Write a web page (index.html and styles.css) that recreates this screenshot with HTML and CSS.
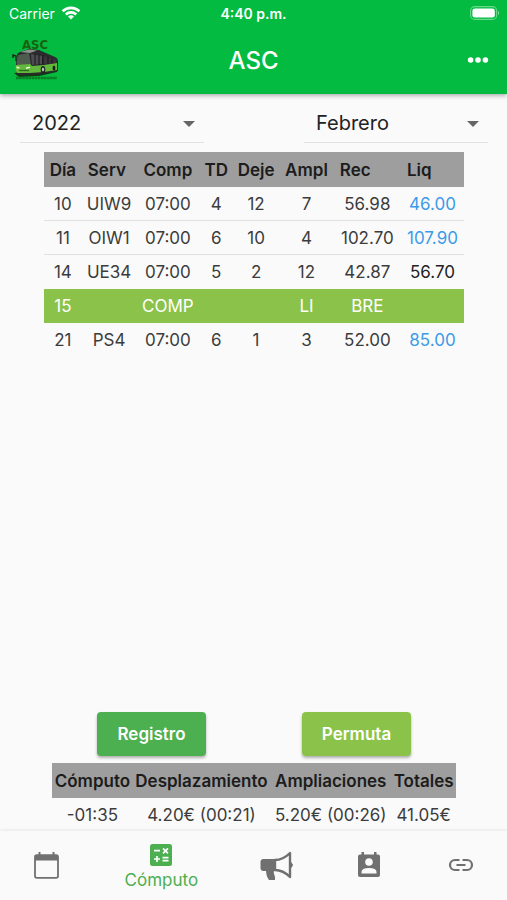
FILE: index.html
```html
<!DOCTYPE html>
<html lang="es">
<head>
<meta charset="utf-8">
<meta name="viewport" content="width=device-width, initial-scale=1">
<title>ASC</title>
<link rel="stylesheet" href="styles.css">
</head>
<body>
<header class="top">
  <div class="status">
    <div class="carrier">
      <span>Carrier</span>
      <svg width="20" height="16" viewBox="0 0 20 16" fill="none" stroke="#fff" stroke-width="2.6" aria-hidden="true"><path d="M1.6 6.3a12 12 0 0 1 16.8 0M4.8 9.5a7.5 7.5 0 0 1 10.4 0"/><path d="M10 14.6l-3-3a4.3 4.3 0 0 1 6 0z" fill="#fff" stroke="none"/></svg>
    </div>
    <span class="time">4:40 p.m.</span>
    <svg class="battery" width="30" height="14" viewBox="0 0 30 14" aria-hidden="true"><rect x=".6" y=".6" width="26" height="12.8" rx="4" fill="none" stroke="#6bd98a" stroke-width="1.1"/><rect x="2.4" y="2.4" width="22.4" height="9.2" rx="2.4" fill="#fff"/><path d="M28 4.8q2 2.2 0 4.4z" fill="#8be09f"/></svg>
  </div>
  <div class="appbar">
    <svg class="logo" width="48" height="48" viewBox="0 0 48 48" aria-hidden="true">
      <text class="logo-name" x="23" y="13">ASC</text>
      <path d="M2 37l16-2 27-2v3l-18 4-20 1z" fill="#123a14"/>
      <path d="M5 19q0-2 3-3l9-3 10 1 16 7q3 1 3 5v9l-16 3-20 1H5q-2-8 0-20z" fill="#2b2a2e"/>
      <path d="M6 19l11-2 2 12-14 1q-1-6 1-11z" fill="#4e5c50"/>
      <path d="M8 16l9-2.500 8 1-7 2.500z" fill="#8f948d"/>
      <path d="M4 29l14-1 2 2 12-1 13-2v7l-13 2-14 1H5q-2-3-1-8z" fill="#62b83a"/>
      <path d="M19 18l11 2v8l-10 1z" fill="#4d4c50"/>
      <path d="M31 20l13 4v3l-13 1z" fill="#3a343c"/>
      <path d="M23 18v11M27 19v10M31 19v9M36 21v7M40 23v4" stroke="#161718" stroke-width="1"/>
      <path d="M4 25v-5l-3-1v3" stroke="#222" stroke-width="1.400" fill="none"/>
      <path d="M4.500 30.500l3 .5v1.600l-3-.4zM14 31.500l4-1v1.500l-4 1z" fill="#eef8df"/>
      <path d="M7 34.500h10" stroke="#2d6b22" stroke-width="1.300"/>
      <ellipse cx="31" cy="33.500" rx="2.300" ry="3.500" fill="#1d211e"/><ellipse cx="31" cy="33.500" rx="1.200" ry="2" fill="#b2bbb0"/>
      <ellipse cx="42" cy="32" rx="1.400" ry="2.600" fill="#1d211e"/>
      <path d="M4 42h41" stroke="#0c7d22" stroke-width="2.400" stroke-dasharray="2.600 .5"/>
    </svg>
    <h1>ASC</h1>
    <button class="more" type="button" aria-label="Más opciones"><svg width="22" height="8" viewBox="0 0 22 8" fill="#fff"><circle cx="3.6" cy="4" r="2.8"/><circle cx="11" cy="4" r="2.8"/><circle cx="18.4" cy="4" r="2.8"/></svg></button>
  </div>
</header>
<main>
  <div class="filters">
    <div class="picker">
      <select aria-label="Año"><option>2022</option></select>
      <svg class="arrow" width="12" height="6" viewBox="0 0 12 6"><path d="M0 0h12L6 6z" fill="#666"/></svg>
    </div>
    <div class="picker">
      <select aria-label="Mes"><option>Febrero</option></select>
      <svg class="arrow" width="12" height="6" viewBox="0 0 12 6"><path d="M0 0h12L6 6z" fill="#666"/></svg>
    </div>
  </div>
  <table class="days">
    <colgroup><col class="c-dia"><col class="c-serv"><col class="c-comp"><col class="c-td"><col class="c-deje"><col class="c-ampl"><col class="c-rec"><col class="c-liq"></colgroup>
    <thead><tr><th>Día</th><th class="start">Serv</th><th>Comp</th><th>TD</th><th>Deje</th><th>Ampl</th><th class="start">Rec</th><th class="start">Liq</th></tr></thead>
    <tbody>
      <tr><td>10</td><td>UIW9</td><td>07:00</td><td>4</td><td>12</td><td>7</td><td>56.98</td><td class="blue">46.00</td></tr>
      <tr><td>11</td><td>OIW1</td><td>07:00</td><td>6</td><td>10</td><td>4</td><td>102.70</td><td class="blue">107.90</td></tr>
      <tr class="before-free"><td>14</td><td>UE34</td><td>07:00</td><td>5</td><td>2</td><td>12</td><td>42.87</td><td class="black">56.70</td></tr>
      <tr class="free"><td>15</td><td></td><td>COMP</td><td></td><td></td><td>LI</td><td>BRE</td><td></td></tr>
      <tr><td>21</td><td>PS4</td><td>07:00</td><td>6</td><td>1</td><td>3</td><td>52.00</td><td class="blue">85.00</td></tr>
    </tbody>
  </table>
  <div class="actions">
    <button class="btn" type="button">Registro</button>
    <button class="btn light" type="button">Permuta</button>
  </div>
  <table class="totals">
    <colgroup><col class="t-comp"><col class="t-desp"><col class="t-ampl"><col class="t-tot"></colgroup>
    <thead><tr><th>Cómputo</th><th>Desplazamiento</th><th>Ampliaciones</th><th>Totales</th></tr></thead>
    <tbody><tr><td>-01:35</td><td>4.20€ (00:21)</td><td>5.20€ (00:26)</td><td>41.05€</td></tr></tbody>
  </table>
</main>
<nav class="tabs">
  <a href="#calendario" aria-label="Calendario"><svg width="28" height="30" viewBox="0 0 28 30"><path d="M7.500 1v5M21.500 1v5" stroke="#707070" stroke-width="2"/><rect x="3" y="4.200" width="23" height="22.600" rx="1.800" fill="none" stroke="#707070" stroke-width="1.800"/><path d="M3 4h23v5.500H3z" fill="#707070"/></svg></a>
  <a class="active" href="#computo"><svg width="24" height="24" viewBox="0 0 24 24"><rect x="1" y="1" width="22" height="22" rx="2.5" fill="#4caf50"/><path d="M5 7.7h6M14 5.3l5 5M19 5.3l-5 5M5 16h6M8 13v6M13.5 14.6h6M13.5 17.6h6" stroke="#fff" stroke-width="1.7"/></svg><span>Cómputo</span></a>
  <a href="#avisos" aria-label="Avisos"><svg width="34" height="32" viewBox="0 0 34 32"><path d="M3.500 9H15v12H3.500Q.5 21 .5 18v-6q0-3 3-3z" fill="#707070"/><path d="M6 20h8q-1 3 1 7v3H9q-3-4-3-10z" fill="#707070"/><path d="M15 10q8 0 15-7v24q-7-7-15-7z" fill="none" stroke="#707070" stroke-width="2.4" stroke-linejoin="round"/><path d="M31 12.500q3 2.500 0 5z" fill="#707070" stroke="#707070"/></svg></a>
  <a href="#contactos" aria-label="Contactos"><svg width="24" height="28" viewBox="0 0 24 28"><path d="M4.500 0h2.500v2.500h10V0h2.500v2.500H21q2 0 2 2V23q0 2-2 2H3q-2 0-2-2V4.500q0-2 2-2h1.500z" fill="#707070"/><circle cx="12" cy="10" r="3.800" fill="#fafafa"/><path d="M4.500 21.500v-1.500q0-4 7.500-4t7.500 4v1.500z" fill="#fafafa"/></svg></a>
  <a href="#enlaces" aria-label="Enlaces"><svg width="26" height="16" viewBox="0 0 26 16" fill="none" stroke="#707070" stroke-width="2.200"><path d="M11.500 2H7a5 5 0 0 0 0 10h4.500M14.500 2H19a5 5 0 0 1 0 10h-4.500M8.500 7h9"/></svg></a>
</nav>
</body>
</html>
```
FILE: styles.css
```css
* { box-sizing: border-box; }

body {
  margin: 0;
  min-height: 100vh;
  display: flex;
  flex-direction: column;
  background: #fafafa;
  color: #3c3c3c;
  font-family: Inter, "Liberation Sans", sans-serif;
  font-size: 17px;
}

.top {
  background: #02bb40;
  color: #fff;
  box-shadow: 0 1px 5px rgba(0, 0, 0, 0.4);
}

.status {
  display: grid;
  grid-template-columns: 1fr auto 1fr;
  align-items: center;
  height: 26px;
  padding: 0 7px;
  font-size: 14px;
}

.carrier { display: flex; align-items: center; gap: 6px; padding-left: 2px; }
.time { font-weight: 600; }
.battery { justify-self: end; }

.appbar {
  display: grid;
  grid-template-columns: 1fr auto 1fr;
  align-items: center;
  height: 68px;
  padding: 0 12px;
}

.logo-name {
  fill: #17630f;
  font: 700 13px "DejaVu Sans Condensed", "DejaVu Sans", sans-serif;
  text-anchor: middle;
}

h1 { margin: 0; font-size: 24px; font-weight: 500; }

.more {
  justify-self: end;
  display: flex;
  padding: 0 6px;
  border: 0;
  background: none;
}

main { flex: 1; display: flex; flex-direction: column; }

.filters {
  display: flex;
  justify-content: space-between;
  gap: 100px;
  padding: 10px 19px 9px 20px;
}

.picker { position: relative; flex: 1; }

.picker select {
  width: 100%;
  height: 39px;
  padding: 0 36px 0 12px;
  border: 0;
  border-bottom: 1px solid #e2e2e2;
  border-radius: 0;
  appearance: none;
  background: none;
  color: #222;
  font: inherit;
  font-size: 20px;
}

.arrow { position: absolute; right: 9px; top: 17px; pointer-events: none; }

table { border-collapse: separate; border-spacing: 0; table-layout: fixed; }

th, td { height: 34px; padding: 0; text-align: center; white-space: nowrap; }

th { height: 35px; background: #9e9e9e; color: #1c1c1c; font-weight: 600; }

.days { margin: 0 43px 0 44px; }
.days td { border-bottom: 1px solid #e0e0e0; }
.days tr:last-child td { border-bottom: 0; }
.days .before-free td { border-color: transparent; }
.days .start { padding-left: 6px; text-align: left; }
.days .blue { color: #3c9be9; }
.days .black { color: #222; }
.days .free td { border-color: #8bc34a; background: #8bc34a; color: #fff; }

.c-dia { width: 9%; }
.c-serv { width: 13%; }
.c-comp { width: 15%; }
.c-td { width: 8%; }
.c-deje { width: 11%; }
.c-ampl { width: 13%; }
.c-rec { width: 16%; }
.c-liq { width: 15%; }

.actions {
  display: grid;
  grid-template-columns: 1fr 1fr;
  justify-items: center;
  margin-top: auto;
  padding: 0 48px 7px 49px;
}

.btn {
  width: 109px;
  height: 44px;
  border: 0;
  border-radius: 4px;
  background: #4caf50;
  box-shadow: 0 2px 3px rgba(0, 0, 0, 0.3);
  color: #fff;
  font: inherit;
  font-weight: 600;
}

.btn.light { background: #8bc34a; }

.totals { margin: 0 51px 0 52px; }
.totals td { height: 33px; }
.t-comp { width: 20%; }
.t-desp { width: 34%; }
.t-ampl { width: 30%; }
.t-tot { width: 16%; }

.tabs {
  display: flex;
  height: 69px;
  box-shadow: 0 -1px 3px rgba(0, 0, 0, 0.08);
}

.tabs a {
  flex: 2;
  display: flex;
  flex-direction: column;
  align-items: center;
  justify-content: center;
  gap: 3px;
  color: #4caf50;
  text-decoration: none;
}

.tabs .active { flex: 3; padding-top: 2px; }
```
